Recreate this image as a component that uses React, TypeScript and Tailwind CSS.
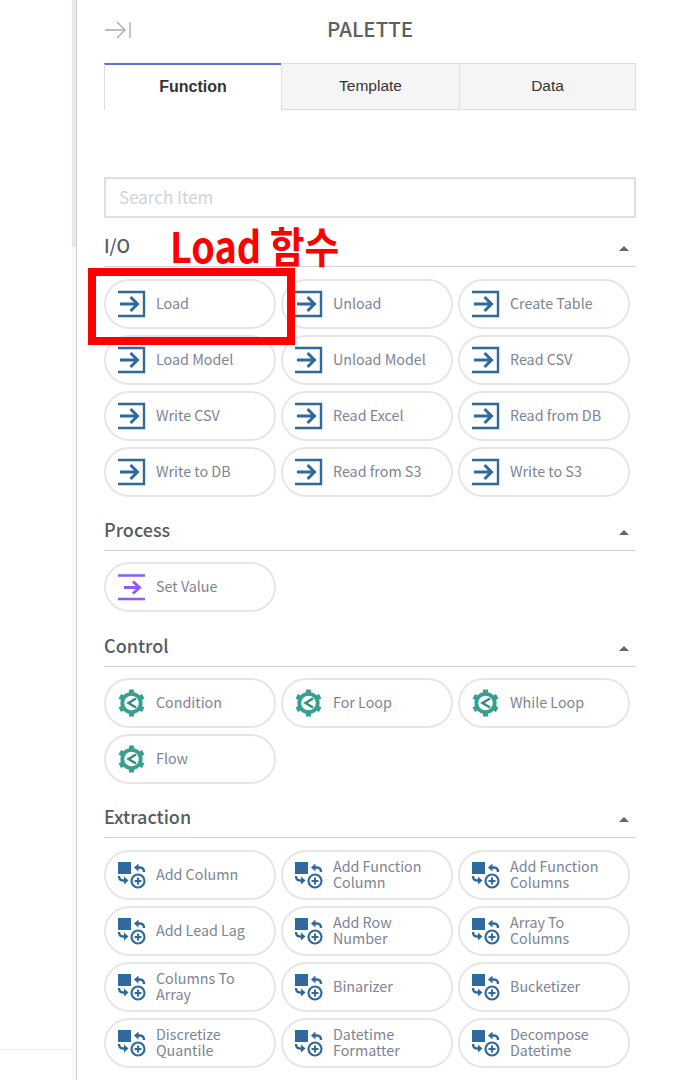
const LoadIcon = () => (
  <svg width="30" height="30" viewBox="0 0 30 30" fill="none" stroke="#2f6a9c" strokeWidth="3" className="shrink-0">
    <path d="M2 3h26v24H2" strokeWidth="2.4" />
    <path d="M4 15h17.500M14.500 8l7 7-7 7" />
  </svg>
)

const SetIcon = () => (
  <svg width="30" height="30" viewBox="0 0 30 30" fill="none" stroke="#8b5cf6" strokeWidth="3" className="shrink-0">
    <path d="M2 3.500h27M2 27h27" strokeWidth="2.400" />
    <path d="M8 15.500h15.500M17 9.500l6.500 6-6.500 6" />
  </svg>
)

const GearIcon = () => (
  <svg width="30" height="30" viewBox="0 0 30 30" fill="none" stroke="#35a08d" className="shrink-0">
    <circle cx="15.500" cy="15" r="9.200" strokeWidth="3.800" />
    <path
      d="M15.500 1.500v4.500M15.500 24v4.500M3.800 8.250l3.900 2.250M27.200 8.250l-3.900 2.250M3.800 21.750l3.900-2.250M27.200 21.750l-3.900-2.250"
      strokeWidth="5"
    />
    <path d="M20 10.500l-7.500 4.500 7.500 4.500" stroke="#2a8f7e" strokeWidth="2.400" />
  </svg>
)

const ColumnIcon = () => (
  <svg width="30" height="30" viewBox="0 0 30 30" fill="none" stroke="#2f6a9c" className="shrink-0">
    <rect x="2" y="2" width="13" height="12" fill="#2f6a9c" stroke="none" />
    <path d="M28 12c0-3-1.500-4.500-4-4.500h-3" strokeWidth="2.400" />
    <path d="M18 7.500l4.500-4v8z" fill="#2f6a9c" stroke="none" />
    <path d="M3 16c0 3 1.500 4.500 4 4.500h2" strokeWidth="2.400" />
    <path d="M12.500 20.500l-4.500-4v8z" fill="#2f6a9c" stroke="none" />
    <circle cx="22" cy="21" r="6.500" strokeWidth="2.200" />
    <path d="M22 17.500v7M18.500 21h7" strokeWidth="2" />
  </svg>
)

type Kind = "load" | "set" | "gear" | "column"

const icons = {
  load: <LoadIcon />,
  set: <SetIcon />,
  gear: <GearIcon />,
  column: <ColumnIcon />,
}

function Pill({ label, kind }: { label: string; kind: Kind }) {
  return (
    <div className="flex h-[50px] w-[172px] items-center gap-[10px] rounded-[25px] border-2 border-[#e6e6e6] bg-white pl-[10px]">
      {icons[kind]}
      <span className="whitespace-pre-line pb-[2px] font-['Noto_Sans_CJK_KR',sans-serif] text-[14.3px] leading-[16px] text-[#7b8494]">{label}</span>
    </div>
  )
}

function Section({ title, kind, items, className, listClass }: { title: string; kind: Kind; items: string[]; className: string; listClass: string }) {
  return (
    <section className={className}>
      <div className="flex h-[38px] items-center justify-between border-b border-[#d4d4d4] pb-[3px]">
        <h3 className="mb-[2px] font-['Noto_Sans_CJK_KR',sans-serif] text-[18px] font-medium text-[#555b63]">{title}</h3>
        <span className="mr-[7px] mt-[5px] h-0 w-0 border-x-[5px] border-b-[5px] border-x-transparent border-b-[#666]"></span>
      </div>
      <div className={`flex flex-wrap gap-x-[5px] gap-y-[6px] ${listClass}`}>
        {items.map((item) => (
          <Pill key={item} label={item} kind={kind} />
        ))}
      </div>
    </section>
  )
}

export default function App() {
  return (
    <div className="flex h-[1080px] w-[691px] overflow-hidden bg-white">
      <div className="flex w-[72px] shrink-0 flex-col justify-end">
        <div className="mb-[30px] h-px w-full bg-[#eeeeee]"></div>
      </div>
      <div className="h-full w-[5px] shrink-0 border-r border-[#d0d0d0] bg-[#f8f8f8]">
        <div className="h-[247px] w-full bg-[#e4e6f2]"></div>
      </div>
      <div className="relative w-[559px] shrink-0 pl-[27px]">
        <div className="relative flex h-[63px] w-[532px] items-center justify-center pb-[6px]">
          <svg width="26" height="18" viewBox="0 0 26 18" fill="none" stroke="#a9a9a9" strokeWidth="1.300" className="absolute left-[1px] top-[21px]">
            <path d="M0 9h20M12 1l8 8-8 8M25 1v16" />
          </svg>
          <h2 className="font-['Noto_Sans_CJK_KR',sans-serif] text-[20.500px] font-medium text-[#606060]">PALETTE</h2>
        </div>

        <div className="flex h-[47px] w-[532px] font-['Liberation_Sans',sans-serif] text-[15.5px] text-[#333]">
          <div className="flex w-[177px] items-center justify-center border-t-2 border-l border-t-[#5f6fdc] border-l-[#dddddd] bg-white pb-[2px] text-[16px] font-bold">Function</div>
          <div className="flex w-[179px] items-center justify-center border border-[#dddddd] bg-[#f5f5f5] pb-[2px]">Template</div>
          <div className="flex w-[176px] items-center justify-center border border-l-0 border-[#dddddd] bg-[#f5f5f5] pb-[2px]">Data</div>
        </div>

        <div className="mt-[67px] flex h-[41px] w-[532px] items-center border-2 border-[#e0e0e0] pb-[2px] pl-[13px] font-['Noto_Sans_CJK_KR',sans-serif] text-[17px] text-[#cfd4da]">Search Item</div>

        <div className="w-[532px]">
          <Section
            title="I/O"
            kind="load"
            className="mt-[11px]"
            listClass="mt-[12px]"
            items={["Load", "Unload", "Create Table", "Load Model", "Unload Model", "Read CSV", "Write CSV", "Read Excel", "Read from DB", "Write to DB", "Read from S3", "Write to S3"]}
          />
          <Section title="Process" kind="set" className="mt-[16px]" listClass="mt-[11px]" items={["Set Value"]} />
          <Section title="Control" kind="gear" className="mt-[17px]" listClass="mt-[11px]" items={["Condition", "For Loop", "While Loop", "Flow"]} />
          <Section
            title="Extraction"
            kind="column"
            className="mt-[16px]"
            listClass="mt-[12px]"
            items={["Add Column", "Add Function\nColumn", "Add Function\nColumns", "Add Lead Lag", "Add Row\nNumber", "Array To\nColumns", "Columns To\nArray", "Binarizer", "Bucketizer", "Discretize\nQuantile", "Datetime\nFormatter", "Decompose\nDatetime"]}
          />
        </div>

        <div className="absolute left-[11px] top-[268px] h-[77px] w-[207px] border-[8px] border-[#ff0000]"></div>
        <div className="absolute left-[93px] top-[215px] origin-left scale-x-[0.9] font-['Noto_Sans_CJK_KR',sans-serif] text-[42px] leading-[60px] font-bold whitespace-nowrap text-[#ff0000]">Load 함수</div>
      </div>
    </div>
  )
}
